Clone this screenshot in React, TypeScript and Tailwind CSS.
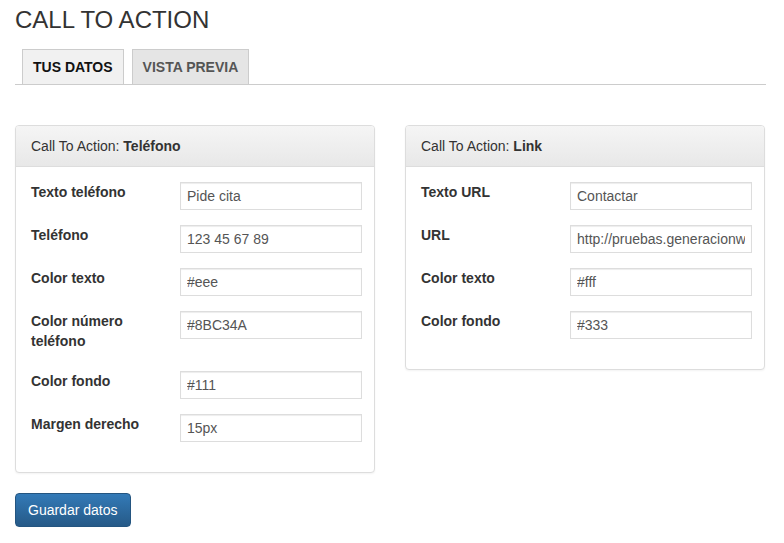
import React from 'react';

type Field = {
  label: string;
  value: string;
};

const telefonoFields: Field[] = [
  { label: 'Texto teléfono', value: 'Pide cita' },
  { label: 'Teléfono', value: '123 45 67 89' },
  { label: 'Color texto', value: '#eee' },
  { label: 'Color número teléfono', value: '#8BC34A' },
  { label: 'Color fondo', value: '#111' },
  { label: 'Margen derecho', value: '15px' },
];

const linkFields: Field[] = [
  { label: 'Texto URL', value: 'Contactar' },
  { label: 'URL', value: 'http://pruebas.generacionweb.es/contacto' },
  { label: 'Color texto', value: '#fff' },
  { label: 'Color fondo', value: '#333' },
];

function Panel({ tipo, fields }: { tipo: string; fields: Field[] }) {
  return (
    <div className="rounded-[4px] border border-[#dddddd] bg-white shadow-[0_1px_2px_rgba(0,0,0,0.05)]">
      <div className="rounded-t-[3px] border-b border-[#dddddd] bg-gradient-to-b from-[#f5f5f5] to-[#e8e8e8] px-[15px] py-[10px] text-[14px] leading-[20px] text-[#333]">
        Call To Action: <b className="font-bold">{tipo}</b>
      </div>
      <div className="pl-[15px] pr-[12px] pt-[15px] pb-[15px]">
        {fields.map((f) => (
          <div key={f.label} className="mb-[15px] grid grid-cols-[149px_1fr] items-start">
            <label className="mb-[5px] pr-[15px] text-[14px] font-bold leading-[20px] text-[#333]">
              {f.label}
            </label>
            <input
              readOnly
              value={f.value}
              className="h-[28px] w-full border border-[#dddddd] bg-white px-[6px] text-[14px] text-[#555] shadow-[inset_0_1px_1px_rgba(0,0,0,0.075)] outline-none"
            />
          </div>
        ))}
      </div>
    </div>
  );
}

export default function App() {
  return (
    <div className="min-h-[543px] w-[784px] bg-white pl-[15px] pr-[18px] font-['Liberation_Sans',Arial,sans-serif] text-[#333]">
      <h2 className="pt-[7px] text-[24px] font-normal leading-[26px] text-[#333]">CALL TO ACTION</h2>

      {/* pestañas */}
      <div className="mt-[16px] flex gap-[8px] border-b border-[#cccccc] pl-[7px]">
        <div className="-mb-px border border-[#cccccc] bg-[#f1f1f1] px-[10px] text-[14px] font-bold leading-[34px] text-[#111]">
          TUS DATOS
        </div>
        <div className="-mb-px border border-[#cccccc] bg-[#e5e5e5] px-[10px] text-[14px] font-bold leading-[34px] text-[#555]">
          VISTA PREVIA
        </div>
      </div>

      <div className="mt-[40px] grid grid-cols-[360px_360px] items-start gap-[30px]">
        <Panel tipo="Teléfono" fields={telefonoFields} />
        <Panel tipo="Link" fields={linkFields} />
      </div>

      <button className="mt-[20px] h-[34px] rounded-[4px] border border-[#245580] bg-gradient-to-b from-[#337ab7] to-[#265a88] px-[12px] text-[14px] text-white">
        Guardar datos
      </button>
    </div>
  );
}
